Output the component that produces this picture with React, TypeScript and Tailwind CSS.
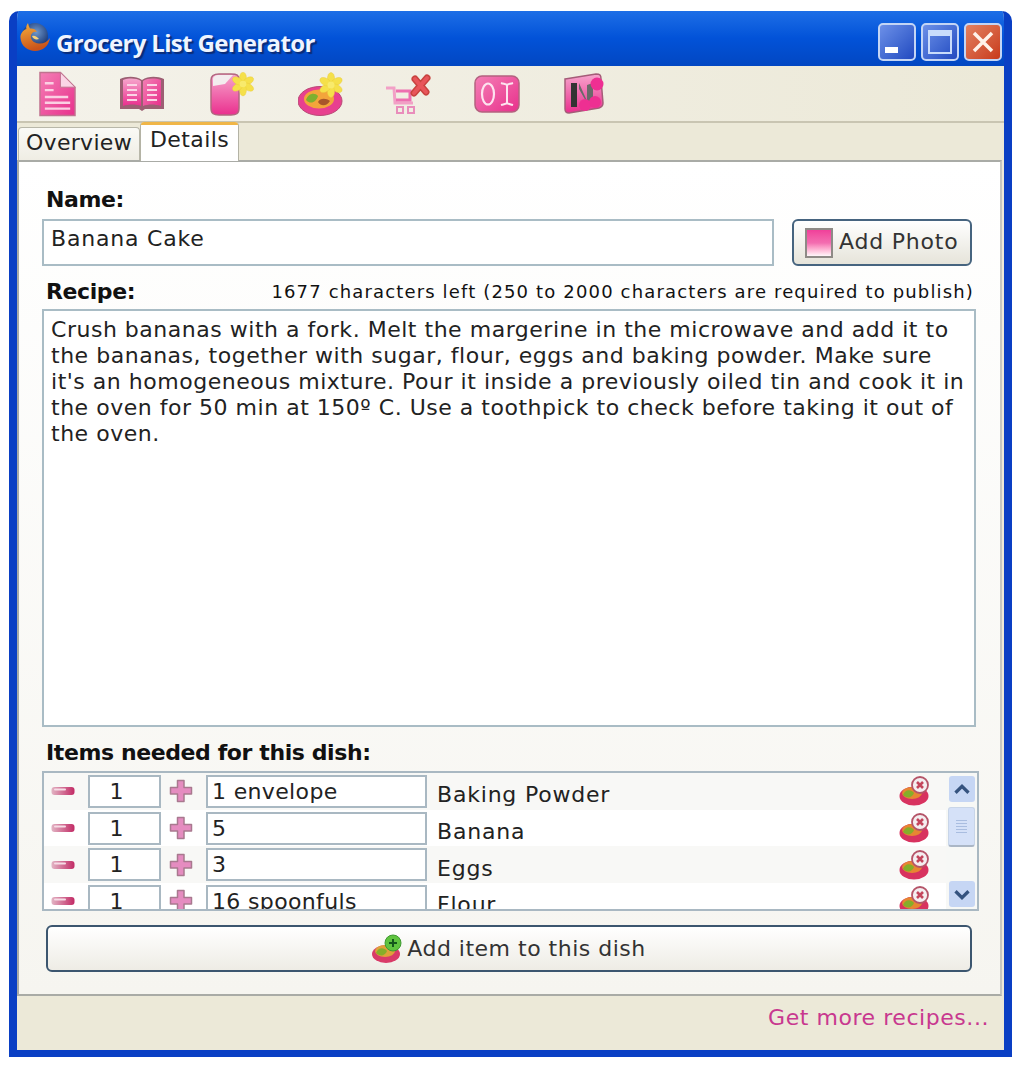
import React from "react";

const font = { fontFamily: '"DejaVu Sans", Verdana, sans-serif' };

function Firefox() {
  return (
    <svg width="32" height="30" viewBox="0 0 32 30">
      <defs>
        <radialGradient id="ffg" cx="0.55" cy="0.35" r="0.6">
          <stop offset="0" stopColor="#6f98cc" />
          <stop offset="1" stopColor="#14306e" />
        </radialGradient>
        <linearGradient id="ffo" x1="0" y1="0" x2="0.3" y2="1">
          <stop offset="0" stopColor="#f6b03c" />
          <stop offset="1" stopColor="#c9521a" />
        </linearGradient>
      </defs>
      <circle cx="16" cy="14" r="13" fill="url(#ffg)" />
      <path d="M9 1 C7 4 7 6 7.500 7 C4 8 1 12 1.500 16 C2 24 9 29 16 29 C24 29 29.500 24 31 16 C28 20 24 22 20 21.500 C14 21 11 17 12 13 C13 10 16 9 18 10 C17 7 13 6 11 6.500 C10 5 9.500 3 9 1 Z" fill="url(#ffo)" />
      <path d="M13 14 C14 17 17 18 20 17 C18 15 16 13 13 14 Z" fill="#f9d27a" />
    </svg>
  );
}

function Star({ x, y, s = 1 }: { x: number; y: number; s?: number }) {
  return (
    <g transform={`translate(${x} ${y}) scale(${s})`}>
      {[0, 60, 120, 180, 240, 300].map((a) => (
        <ellipse key={a} cx="0" cy="-6.500" rx="3.600" ry="6" fill="#f5e04a" stroke="#e9c93c" strokeWidth="0.400" transform={`rotate(${a})`} />
      ))}
      <circle r="3.500" fill="#f8ea6c" />
    </g>
  );
}

function Defs() {
  return (
    <svg width="0" height="0" className="absolute">
      <defs>
        <linearGradient id="pk" x1="0" y1="0" x2="1" y2="1">
          <stop offset="0" stopColor="#f47fb5" />
          <stop offset="1" stopColor="#e8308c" />
        </linearGradient>
        <linearGradient id="pkv" x1="0" y1="0" x2="0" y2="1">
          <stop offset="0" stopColor="#f6a5cc" />
          <stop offset="1" stopColor="#ea2f8e" />
        </linearGradient>
      </defs>
    </svg>
  );
}

function DocIcon() {
  return (
    <svg width="37" height="46" viewBox="0 0 38 46">
      <path d="M1 1 H22 L37 16 V45 H1 Z" fill="url(#pk)" stroke="#c0738f" strokeWidth="1.500" />
      <path d="M22 1 L37 16 H22 Z" fill="#fbd5e6" stroke="#c0738f" />
      <g stroke="#fbd0e3" strokeWidth="2.500">
        <path d="M6 12 H15 M6 19 H15 M6 26 H30 M6 32 H32 M6 38 H32" />
      </g>
    </svg>
  );
}

function BookIcon() {
  return (
    <svg width="46" height="38" viewBox="0 0 46 38">
      <path d="M1 4 C8 1 17 1 23 5 C29 1 38 1 45 4 V34 H26 L23 36 L20 34 H1 Z" fill="#9c5f73" />
      <path d="M4 5 C10 3 17 3 22 6 V31 C17 29 10 29 4 31 Z" fill="url(#pkv)" />
      <path d="M42 5 C36 3 29 3 24 6 V31 C29 29 36 29 42 31 Z" fill="url(#pk)" />
      <path d="M8 10 H18 M8 15 H18 M8 20 H18 M8 25 H18 M28 10 H38 M28 15 H38 M28 20 H38 M28 25 H38" stroke="#fbd5e6" strokeWidth="2" />
    </svg>
  );
}

function JarIcon() {
  return (
    <svg width="46" height="44" viewBox="0 0 46 44">
      <path d="M2 8 C2 3 6 2 10 2 H22 C28 2 30 3 30 8 V36 C30 42 27 43 22 43 H10 C5 43 2 42 2 36 Z" fill="url(#pkv)" stroke="#b2677f" strokeWidth="1.500" />
      <path d="M4 14 V7 C4 4 7 3 10 3 H24 L16 12 Z" fill="#f3ecee" />
      <Star x={34} y={12} s={0.95} />
    </svg>
  );
}

function PlateIcon() {
  return (
    <svg width="46" height="44" viewBox="0 0 46 44">
      <ellipse cx="22" cy="29" rx="22" ry="14.500" fill="#e8408f" stroke="#b84a76" />
      <ellipse cx="21" cy="27" rx="15" ry="9.500" fill="#f3a53b" />
      <path d="M8 28 C10 21 17 20 20 24 C18 30 13 33 8 28 Z" fill="#7eb02f" />
      <path d="M20 30 C22 26 28 26 32 29 C29 34 23 35 20 30 Z" fill="#a8562a" />
      <Star x={33} y={13} s={1} />
    </svg>
  );
}

function CartIcon() {
  return (
    <svg width="46" height="40" viewBox="0 0 46 40">
      <path d="M0 14 H8 L9 29 H27" fill="none" stroke="#f2a0c6" strokeWidth="3" />
      <path d="M10 17 H24 V26 H10" fill="none" stroke="#ee6fb0" strokeWidth="3" />
      <rect x="11" y="33" width="6" height="6" fill="none" stroke="#e98dbb" strokeWidth="2" />
      <rect x="22" y="33" width="6" height="6" fill="none" stroke="#e98dbb" strokeWidth="2" />
      <path d="M29 5 L40 18 M41 4 L28 19" stroke="#c8433f" strokeWidth="7" strokeLinecap="round" />
      <path d="M29 5 L40 18 M41 4 L28 19" stroke="#e8555a" strokeWidth="4" strokeLinecap="round" />
    </svg>
  );
}

function BadgeIcon() {
  return (
    <svg width="46" height="38" viewBox="0 0 46 38">
      <rect x="1" y="1" width="44" height="36" rx="7" fill="url(#pk)" stroke="#b4627f" strokeWidth="1.500" />
      <ellipse cx="14" cy="19" rx="6" ry="10.500" fill="none" stroke="#fde3ef" strokeWidth="2.200" />
      <path d="M27 8 C30 9 32 9 33 10 C34 9 36 9 39 8 M33 10 V28 M27 30 C30 29 32 29 33 28 C34 29 36 29 39 30" fill="none" stroke="#fde3ef" strokeWidth="2" />
    </svg>
  );
}

function MapIcon() {
  return (
    <svg width="44" height="42" viewBox="0 0 44 42">
      <path d="M2 6 L33 1 C37 1 38 2 38 6 L40 30 C40 33 39 34 36 35 L6 40 C3 40 2 39 2 36 Z" fill="url(#pkv)" stroke="#a55c78" strokeWidth="1.500" />
      <path d="M8 10 H14 V34 H8 Z" fill="#333" />
      <path d="M16 10 L24 28 V12 L30 10 V26 L24 30 L16 16 Z" fill="#6a6a6a" />
      <circle cx="34" cy="11" r="6.500" fill="#ee2f92" />
      <circle cx="22" cy="32" r="6" fill="#ee2f92" />
      <circle cx="32" cy="29" r="6" fill="#ee2f92" />
    </svg>
  );
}

function Minus() {
  return (
    <svg width="24" height="12" viewBox="0 0 24 12">
      <defs>
        <linearGradient id="mn" x1="0" y1="0" x2="1" y2="0">
          <stop offset="0" stopColor="#e2b4c4" />
          <stop offset="1" stopColor="#c22a65" />
        </linearGradient>
      </defs>
      <rect x="0.500" y="2" width="23" height="8" rx="3" fill="url(#mn)" />
      <rect x="3" y="3.500" width="12" height="2" rx="1" fill="#f6dce6" />
    </svg>
  );
}

function Plus() {
  return (
    <svg width="24" height="24" viewBox="0 0 24 24">
      <path d="M8.500 1.500 H15 V8.500 H22.500 V15 H15 V22.500 H8.500 V15 H1.500 V8.500 H8.500 Z" fill="#e58cc0" stroke="#a9798f" strokeWidth="1.500" strokeLinejoin="round" />
    </svg>
  );
}

function Remove() {
  return (
    <svg width="32" height="30" viewBox="0 0 32 30">
      <ellipse cx="15" cy="20" rx="14.500" ry="9.500" fill="#d8325f" />
      <ellipse cx="13" cy="17" rx="10" ry="6" fill="#e78632" />
      <path d="M4 19 C6 13 12 13 15 17 C13 22 8 23 4 19 Z" fill="#86ad2a" />
      <circle cx="21" cy="9" r="8" fill="#f4eef0" stroke="#b55468" strokeWidth="1.800" />
      <path d="M18 6 L24 12 M24 6 L18 12" stroke="#c4455c" strokeWidth="2.600" />
    </svg>
  );
}

function AddFood() {
  return (
    <svg width="30" height="30" viewBox="0 0 30 30">
      <ellipse cx="14" cy="20" rx="14" ry="9" fill="#d93a68" />
      <ellipse cx="13" cy="17" rx="10" ry="6" fill="#e0a03a" />
      <path d="M4 19 C6 13 12 13 15 17 C13 22 8 23 4 19 Z" fill="#86ad2a" />
      <circle cx="21" cy="9" r="8" fill="#5fc33f" stroke="#3f9a31" />
      <path d="M17 9 H25 M21 5 V13" stroke="#14561c" strokeWidth="2" />
    </svg>
  );
}

function CaptionButton({ red, children }: { red?: boolean; children: React.ReactNode }) {
  return (
    <div
      className={`flex h-[38px] w-[38px] items-center justify-center rounded-[5px] border-2 border-[#c3d5f5] ${
        red ? "bg-gradient-to-br from-[#e2805f] to-[#c8391a]" : "bg-gradient-to-br from-[#6d90e8] to-[#2249c0]"
      }`}
    >
      {children}
    </div>
  );
}

const rows = [
  { unit: "1 envelope", name: "Baking Powder", alt: true },
  { unit: "5", name: "Banana", alt: false },
  { unit: "3", name: "Eggs", alt: true },
  { unit: "16 spoonfuls", name: "Flour", alt: false },
];

function Row({ unit, name, alt }: { unit: string; name: string; alt: boolean }) {
  return (
    <div className={`flex h-[36.700px] shrink-0 items-center ${alt ? "bg-[#f8f8f6]" : "bg-white"}`}>
      <div className="ml-[7px] flex w-[24px] shrink-0"><Minus /></div>
      <div className="ml-[13px] flex h-[33px] w-[73px] shrink-0 items-center justify-center border-2 border-[#a9b8c2] bg-white pr-[16px]">1</div>
      <div className="ml-[8px] flex w-[24px] shrink-0"><Plus /></div>
      <div className="ml-[13px] flex h-[33px] w-[221px] shrink-0 items-center border-2 border-[#a9b8c2] bg-white pl-[4px] tracking-[0.35px]">{unit}</div>
      <div className="ml-[10px] mt-[7px] w-[463px] shrink-0 tracking-[0.8px]">{name}</div>
      <div className="-ml-[1px] flex w-[32px] shrink-0"><Remove /></div>
    </div>
  );
}

export default function App() {
  return (
    <div className="h-[1071px] w-[1020px] overflow-hidden bg-white pl-[9px] pt-[11px] text-[#222]" style={font}>
      <Defs />
      <div className="flex h-[1046px] w-[1003px] flex-col overflow-hidden rounded-t-[10px] border-x-[8px] border-b-[7px] border-x-[#0a3fc4] border-b-[#0a3fc4] bg-[#ece9d8]">
        <div className="-mx-[8px] flex h-[55px] shrink-0 items-center bg-gradient-to-b from-[#1d6ee6] via-[#0252d8] to-[#0247c2] pl-[10px] pr-[10px]">
          <div className="-mt-[4px] flex w-[32px] shrink-0"><Firefox /></div>
          <div
            className="ml-[5px] mt-[8px] flex-1 text-[24px] font-bold tracking-[-0.65px] text-[#eef4ff] [text-shadow:2px_2px_1px_#0a2c78]"
            style={{ fontFamily: '"Open Sans", sans-serif' }}
          >
            Grocery List Generator
          </div>
          <div className="mt-[6px] flex gap-[5px]">
            <CaptionButton><div className="mt-[16px] mr-[12px] h-[6px] w-[13px] bg-white" /></CaptionButton>
            <CaptionButton><div className="h-[24px] w-[24px] border-2 border-t-[6px] border-[#c9dcfb]" /></CaptionButton>
            <CaptionButton red>
              <svg width="24" height="24" viewBox="0 0 24 24"><path d="M3 3 L21 21 M21 3 L3 21" stroke="#fff3ea" strokeWidth="3.500" /></svg>
            </CaptionButton>
          </div>
        </div>

        <div className="flex h-[57px] shrink-0 items-center border-b-[2px] border-[#c9c5b2] bg-gradient-to-r from-[#f4f2ea] to-[#ece9d8]">
          <div className="flex h-[46px] w-[80px] items-center justify-center"><DocIcon /></div>
          <div className="flex w-[90px] items-center justify-center"><BookIcon /></div>
          <div className="flex w-[90px] items-center justify-center"><JarIcon /></div>
          <div className="flex w-[88px] items-center justify-center"><PlateIcon /></div>
          <div className="flex w-[88px] items-center justify-center"><CartIcon /></div>
          <div className="flex w-[88px] items-center justify-center"><BadgeIcon /></div>
          <div className="flex w-[88px] items-center justify-center"><MapIcon /></div>
        </div>

        <div className="relative z-10 flex h-[37px] shrink-0 items-end pl-[1px] text-[22px]">
          <div className="flex h-[33px] w-[122px] items-center justify-center rounded-t-[4px] border border-b-0 border-[#b8b7a9] bg-gradient-to-b from-[#fafaf6] to-[#efede4] pb-[4px] tracking-[0.3px]">Overview</div>
          <div className="-mb-[1px] flex h-[39px] w-[99px] flex-col rounded-t-[4px] border-x border-[#b4b3a5] bg-white">
            <div className="h-[3px] rounded-t-[3px] bg-[#f0b648]" />
            <div className="-mt-[2px] flex flex-1 items-start justify-center tracking-[0.4px]">Details</div>
          </div>
        </div>

        <div className="flex h-[836px] w-[985px] shrink-0 flex-col border-2 border-[#a9aba6] border-r-[#c4c6c0] bg-gradient-to-b from-white to-[#f6f5f0] pl-[23px] pr-[1px] text-[22px]">
          <div className="mt-[24px] h-[28px] pl-[4px] leading-[28px] font-bold tracking-[-0.4px] text-[#111]">Name:</div>
          <div className="mt-[5px] flex h-[48px] items-start">
            <div className="flex h-[47px] w-[732px] items-start border-2 border-[#a9bcc5] bg-white pl-[7px] pt-[2px] leading-[32px] tracking-[0.8px]">Banana Cake</div>
            <div className="ml-[18px] flex h-[47px] w-[180px] items-center rounded-[6px] border-2 border-[#46647f] bg-gradient-to-b from-white to-[#e6e4da] pb-[2px] pl-[11px]">
              <div className="mt-[2px] h-[30px] w-[28px] border-2 border-[#8e8a86] bg-gradient-to-b from-[#f03f9a] via-[#f36db0] to-[#fdf6f9]" />
              <span className="ml-[6px] tracking-[0.8px] text-[#333]">Add Photo</span>
            </div>
          </div>
          <div className="mt-[7px] flex h-[34px] w-[932px] items-center justify-between pl-[4px]">
            <span className="font-bold tracking-[-0.4px] text-[#111]">Recipe:</span>
            <span className="text-[18px] tracking-[1.15px] text-[#111]">1677 characters left (250 to 2000 characters are required to publish)</span>
          </div>
          <div className="mt-[1px] h-[418px] w-[934px] border-2 border-[#a9bcc5] bg-white pl-[7px] pt-[6px] leading-[26px] tracking-[0.52px]">
            Crush bananas with a fork. Melt the margerine in the microwave and add it to
            <br />the bananas, together with sugar, flour, eggs and baking powder. Make sure
            <br />it's an homogeneous mixture. Pour it inside a previously oiled tin and cook it in
            <br />the oven for 50 min at 150º C. Use a toothpick to check before taking it out of
            <br />the oven.
          </div>
          <div className="mt-[11px] h-[30px] pl-[4px] leading-[30px] font-bold tracking-[-0.4px] text-[#111]">Items needed for this dish:</div>
          <div className="mt-[3px] flex h-[140px] w-[937px] overflow-hidden border-2 border-[#a9b8c2] bg-white">
            <div className="flex flex-1 flex-col overflow-hidden whitespace-nowrap">
              {rows.map((r) => (
                <Row key={r.name} unit={r.unit} name={r.name} alt={r.alt} />
              ))}
            </div>
            <div className="flex w-[31px] shrink-0 flex-col items-center bg-[#f7f8f6] pt-[3px]">
              <div className="flex h-[26px] w-[26px] items-center justify-center rounded-[3px] bg-[#c6d6f4]">
                <svg width="18" height="13" viewBox="0 0 16 12"><path d="M2 9 L8 3 L14 9" fill="none" stroke="#35537f" strokeWidth="3" /></svg>
              </div>
              <div className="mt-[5px] flex h-[40px] w-[27px] flex-col items-center justify-center gap-[2px] rounded-[3px] border border-b-2 border-[#c8d5e8] border-b-[#aab6c6] bg-[#d5e1f8]">
                <div className="h-[1px] w-[11px] bg-[#a9bde0]" />
                <div className="h-[1px] w-[11px] bg-[#a9bde0]" />
                <div className="h-[1px] w-[11px] bg-[#a9bde0]" />
                <div className="h-[1px] w-[11px] bg-[#a9bde0]" />
                <div className="h-[1px] w-[11px] bg-[#a9bde0]" />
              </div>
              <div className="flex-1" />
              <div className="mb-[2px] flex h-[26px] w-[26px] items-center justify-center rounded-[3px] bg-[#c6d6f4]">
                <svg width="18" height="13" viewBox="0 0 16 12"><path d="M2 3 L8 9 L14 3" fill="none" stroke="#35537f" strokeWidth="3" /></svg>
              </div>
            </div>
          </div>
          <div className="ml-[4px] mt-[14px] flex h-[47px] w-[926px] items-center justify-center rounded-[6px] border-2 border-[#3c566f] bg-gradient-to-b from-white to-[#eeece5] text-[#333]">
            <AddFood />
            <span className="ml-[5px] tracking-[0.5px]">Add item to this dish</span>
          </div>
        </div>

        <div className="flex flex-1 items-center justify-end pb-[12px] pr-[15px] text-[22px] tracking-[0.55px] text-[#c8388f]">Get more recipes...</div>
      </div>
    </div>
  );
}
